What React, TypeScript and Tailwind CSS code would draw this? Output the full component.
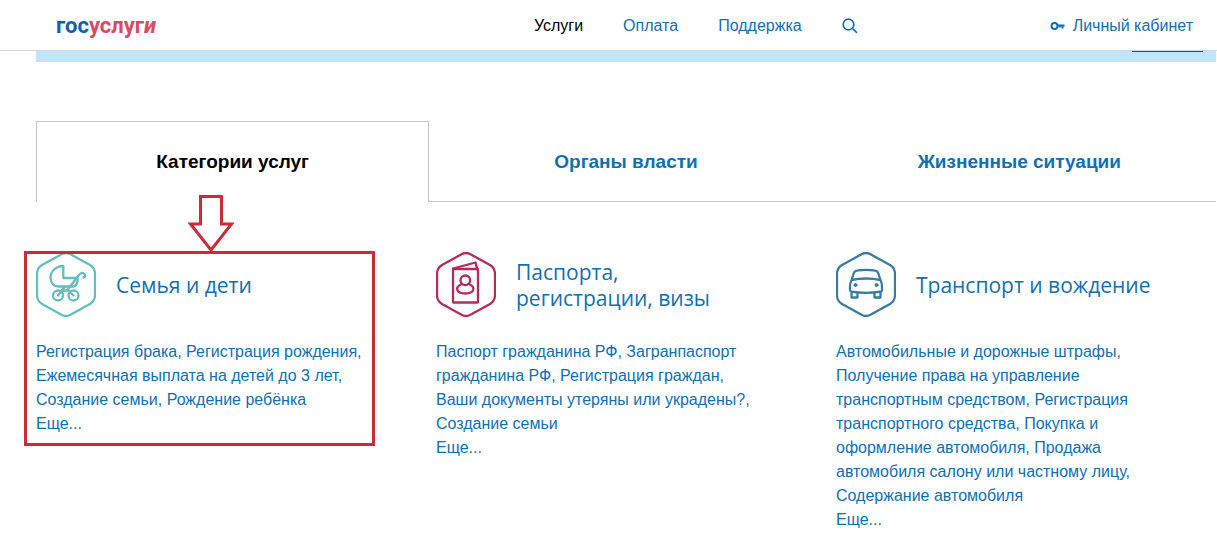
import React from 'react';

interface Category {
    id: string;
    title: string;
    icon: React.ReactNode;
    links: string[];
    marked?: boolean;
}

const HEXAGON = 'M26 2Q30 0 34 2L54 13Q59 16 59 22V43Q59 49 54 52L34 63Q30 65 26 63L6 52Q1 49 1 43V22Q1 16 6 13Z';

const StrollerIcon = () => (
    <svg viewBox="0 0 60 65" className="h-[65px] w-[60px] shrink-0" fill="none" stroke="#62bfbd" strokeWidth="2.300" strokeLinecap="round" strokeLinejoin="round">
        <path d={HEXAGON} />
        <path d="M27.300 14C20 14 14.500 19.500 14.500 25.500C14.500 30 17 34.500 22 34.500H37C40.500 34.500 42 30 41.500 26H27.300Z" />
        <path d="M26 38.500H31L42.500 23.500C44 21.500 45.500 20.500 47 21C49.500 21.800 50 25 47.500 25.500" />
        <path d="M22 43.500L28.500 35M37.500 43.500L31.500 38" />
        <circle cx="22" cy="43.500" r="5" />
        <circle cx="37.500" cy="43.500" r="5" />
    </svg>
);

const PassportIcon = () => (
    <svg viewBox="0 0 60 65" className="h-[65px] w-[60px] shrink-0" fill="none" stroke="#b82a5b" strokeWidth="2.300" strokeLinecap="round" strokeLinejoin="round">
        <path d={HEXAGON} />
        <rect x="17" y="17" width="25" height="33.500" rx="0.500" />
        <path d="M17 16.500L39.500 10.500L41 16.500" />
        <circle cx="29.300" cy="28.300" r="4.800" />
        <path d="M26 32C18 35 20.500 41.500 29.300 41.500C38 41.500 40.500 35 32.600 32" />
    </svg>
);

const CarIcon = () => (
    <svg viewBox="0 0 60 65" className="h-[65px] w-[60px] shrink-0" fill="none" stroke="#377da2" strokeWidth="2.300" strokeLinecap="round" strokeLinejoin="round">
        <path d={HEXAGON} />
        <path d="M15.500 28L18 20.500Q19 18.500 22 18.300Q30 17.300 38 18.300Q41 18.500 42 20.500L44.500 28Q46 31 46 35V38Q46 39.500 44.500 39.700Q30 42 15.500 39.700Q14 39.500 14 38V35Q14 31 15.500 28Q30 25 44.500 28" />
        <path d="M15.500 40.500V45.500H21.500V41M38.500 41V45.500H44.500V40.500" />
        <circle cx="19.500" cy="33" r="1.500" fill="#377da2" strokeWidth="1" />
        <circle cx="40.500" cy="33" r="1.500" fill="#377da2" strokeWidth="1" />
    </svg>
);

const KeyIcon = () => (
    <svg viewBox="0 0 15 10" className="h-[10px] w-[15px]" fill="none" stroke="currentColor" strokeWidth="2">
        <circle cx="4.500" cy="5" r="3" />
        <path d="M7.500 4.500H14.500M12.500 4.500V7.500M9.800 4.500V6.500" />
    </svg>
);

const SearchIcon = () => (
    <svg viewBox="0 0 16 16" className="size-4" fill="none" stroke="currentColor" strokeWidth="1.700">
        <circle cx="6.500" cy="6.500" r="5.300" />
        <path d="M10.500 10.500L15 14.800" />
    </svg>
);

const categories: Category[] = [
    {
        id: 'family',
        title: 'Семья и дети',
        icon: <StrollerIcon />,
        marked: true,
        links: ['Регистрация брака', 'Регистрация рождения', 'Ежемесячная выплата на детей до 3 лет', 'Создание семьи', 'Рождение ребёнка'],
    },
    {
        id: 'passport',
        title: 'Паспорта, регистрации, визы',
        icon: <PassportIcon />,
        links: ['Паспорт гражданина РФ', 'Загранпаспорт гражданина РФ', 'Регистрация граждан', 'Ваши документы утеряны или украдены?', 'Создание семьи'],
    },
    {
        id: 'transport',
        title: 'Транспорт и вождение',
        icon: <CarIcon />,
        links: [
            'Автомобильные и дорожные штрафы',
            'Получение права на управление транспортным средством',
            'Регистрация транспортного средства',
            'Покупка и оформление автомобиля',
            'Продажа автомобиля салону или частному лицу',
            'Содержание автомобиля',
        ],
    },
];

// Red frame with an arrow, drawn over the highlighted category
const Marker = () => (
    <div className="pointer-events-none absolute -top-px right-[41px] -bottom-2.5 -left-3 border-3 border-[#cb2c36]">
        <svg viewBox="0 0 48 59" className="absolute -top-[60px] left-40 h-[59px] w-12" fill="none" stroke="#cb2c36" strokeWidth="3">
            <path d="M13.500 2.500H34.500V30H44.500L24 56L3.500 30H13.500Z" />
        </svg>
    </div>
);

const CategoryCard = ({ category }: { category: Category }) => (
    <section className="relative">
        <div className="flex items-center gap-5">
            {category.icon}
            <h2 className="max-w-60 font-['Open_Sans',sans-serif] text-[21px] leading-[26px]">
                <a href="#">{category.title}</a>
            </h2>
        </div>
        <p className="mt-[23px] pr-[52px]">
            {category.links.map((link, idx) => (
                <React.Fragment key={link}>
                    <a href="#">{link}</a>
                    {idx < category.links.length - 1 && ', '}
                </React.Fragment>
            ))}
        </p>
        <a href="#" className="block">Еще...</a>
        {category.marked && <Marker />}
    </section>
);

const App: React.FC = () => {
    return (
        <div className="min-h-screen bg-white font-['Liberation_Sans',Arial,sans-serif] text-base text-[#0f70b3]">
            <header className="flex h-[51px] items-center border-b border-[#d3d6d9] pt-0.5 pr-6 pl-14">
                <a href="#" className="font-[Roboto,sans-serif] text-[22px] leading-6 font-bold text-[#0e63a5]">
                    гос<span className="text-[#dc4a62]">услуг<i>и</i></span>
                </a>
                <nav className="ml-auto flex items-center gap-10">
                    <a href="#" className="text-black">Услуги</a>
                    <a href="#">Оплата</a>
                    <a href="#">Поддержка</a>
                    <button type="button" aria-label="Поиск">
                        <SearchIcon />
                    </button>
                </nav>
                <a href="#" className="ml-48 flex items-center gap-2">
                    <KeyIcon />
                    Личный кабинет
                </a>
            </header>

            <main className="mr-px ml-9">
                <div className="flex h-[11px] justify-end bg-[#bfe4fb] pr-[13px]">
                    <div className="h-px w-[71px] bg-[#0b5a94]" />
                </div>

                <div role="tablist" className="mt-[59px] grid grid-cols-3 text-[19px] font-bold">
                    <button type="button" role="tab" aria-selected="true" className="h-[81px] border border-b-0 border-[#c8c8c8] text-black">
                        Категории услуг
                    </button>
                    <button type="button" role="tab" aria-selected="false" className="border-b border-[#c8c8c8] pt-0.5">
                        Органы власти
                    </button>
                    <button type="button" role="tab" aria-selected="false" className="border-b border-[#c8c8c8] pt-0.5">
                        Жизненные ситуации
                    </button>
                </div>

                <div className="mt-[50px] grid grid-cols-3 items-start gap-5">
                    {categories.map((category) => (
                        <CategoryCard key={category.id} category={category} />
                    ))}
                </div>
            </main>
        </div>
    );
};

export default App;
